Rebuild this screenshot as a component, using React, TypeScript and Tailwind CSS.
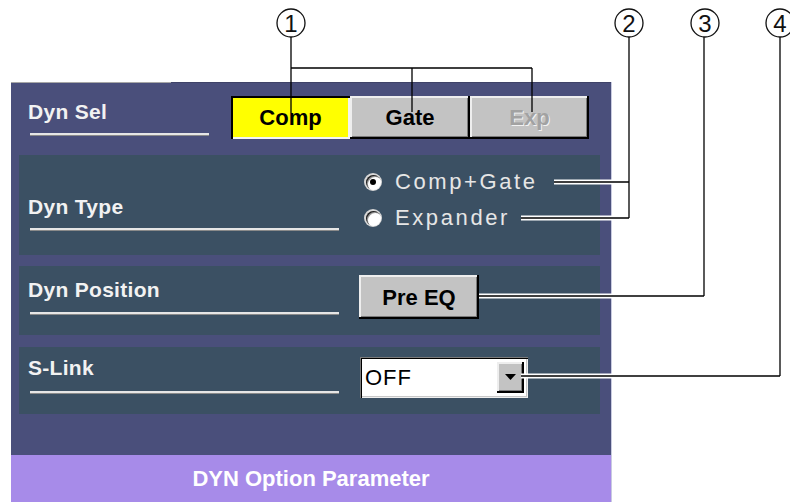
import { ReactNode } from "react";

const FONT = { fontFamily: '"Liberation Sans", Arial, sans-serif' };

const RAISED =
  "bg-[#c3c3c3] shadow-[inset_-2px_-2px_0_#000000,inset_2px_2px_0_#eeeeee,inset_-3px_-3px_0_#7a7a7a]";

function Underline({ width }: { width: number }) {
  return (
    <div
      className="ml-[2px] h-[3px] bg-[#e6e6e6] border-b border-[#8a8a8a]"
      style={{ width }}
    />
  );
}

function Label({ text, pt, gap, line }: { text: string; pt: number; gap: number; line: number }) {
  return (
    <div className="flex flex-col" style={{ paddingTop: pt }}>
      <div className="text-[21px] leading-[24px] font-bold text-[#f2f2f2] tracking-[0.3px]">{text}</div>
      <div style={{ marginTop: gap }}>
        <Underline width={line} />
      </div>
    </div>
  );
}

function Section({ h, children }: { h: number; children: ReactNode }) {
  return (
    <div className="flex bg-[#3b5063] pl-[9px]" style={{ height: h }}>
      {children}
    </div>
  );
}

function Radio({ checked, label }: { checked?: boolean; label: string }) {
  return (
    <div className="flex h-[36px] items-center gap-[13px]">
      <div className="flex h-[18px] w-[18px] items-center justify-center rounded-full bg-[#d8d8d8]">
        <div className="flex h-[15px] w-[15px] items-center justify-center rounded-full bg-white shadow-[inset_1px_1px_0_#222222,inset_2px_2px_0_#9a9a9a]">
          {checked && <div className="h-[6px] w-[6px] rounded-full bg-black" />}
        </div>
      </div>
      <span className="text-[22px] leading-none text-[#e6e6e6] tracking-[2.6px]">{label}</span>
    </div>
  );
}

function Callout({ n, x }: { n: string; x: number }) {
  return (
    <g>
      <circle cx={x} cy={23} r={14} fill="white" stroke="#111" strokeWidth={1.3} />
      <text
        x={x}
        y={32}
        textAnchor="middle"
        fontSize={24}
        fontFamily='"Liberation Sans", Arial, sans-serif'
        fill="#111"
      >
        {n}
      </text>
    </g>
  );
}

function Leader({ d }: { d: string }) {
  return (
    <g>
      <path d={d} stroke="white" strokeWidth={5} fill="none" />
      <path d={d} stroke="#000" strokeWidth={1.5} fill="none" />
    </g>
  );
}

export default function App() {
  return (
    <div className="relative h-[502px] w-[790px] overflow-hidden bg-white" style={FONT}>
      <div className="ml-[11px] mt-[82px] flex h-[420px] w-[601px] flex-col bg-[#4a4f7b] border-r border-[#c9cbe0]">
        <div className="flex h-[1px] shrink-0">
          <div className="w-[160px] bg-[#a7a7a7]" />
          <div className="flex-1 bg-[#3f4368]" />
        </div>

        {/* Dyn Sel */}
        <div className="flex h-[72px] shrink-0 pl-[17px]">
          <div className="w-[203px]">
            <Label text="Dyn Sel" pt={17} gap={9} line={179} />
          </div>
          <div className="mt-[13px] flex h-[43px]">
            <div className="flex w-[119px] items-center justify-center bg-[#ffff00] text-[22px] font-bold text-black shadow-[inset_2px_2px_0_#000000,inset_-2px_-2px_0_#f4f4f4]">
              Comp
            </div>
            <div className={`flex w-[120px] items-center justify-center text-[22px] font-bold text-black ${RAISED}`}>
              Gate
            </div>
            <div
              className={`flex w-[119px] items-center justify-center text-[22px] font-bold text-[#a2a2a2] [text-shadow:1px_1px_0_#f2f2f2] ${RAISED}`}
            >
              Exp
            </div>
          </div>
        </div>

        <div className="ml-[8px] flex w-[581px] flex-col">
          <Section h={100}>
            <div className="w-[331px]">
              <Label text="Dyn Type" pt={40} gap={9} line={309} />
            </div>
            <div className="ml-[5px] flex flex-col pt-[9px]">
              <Radio checked label="Comp+Gate" />
              <Radio label="Expander" />
            </div>
          </Section>
          <div className="h-[11px]" />
          <Section h={69}>
            <div className="w-[331px]">
              <Label text="Dyn Position" pt={12} gap={10} line={309} />
            </div>
            <div className="pt-[9px]">
              <div className={`flex h-[44px] w-[120px] items-center justify-center text-[22px] font-bold text-black ${RAISED}`}>
                Pre EQ
              </div>
            </div>
          </Section>
          <div className="h-[12px]" />
          <Section h={67}>
            <div className="w-[332px]">
              <Label text="S-Link" pt={9} gap={11} line={309} />
            </div>
            <div className="pt-[10px]">
              <div className="flex h-[41px] w-[168px] items-center bg-white shadow-[inset_1px_1px_0_#7a7a7a,inset_2px_2px_0_#000000,inset_-1px_-1px_0_#efefef,inset_-2px_-2px_0_#c8c8c8] pr-[4px]">
                <span className="flex-1 pl-[5px] text-[22px] leading-none text-black tracking-[1px]">OFF</span>
                <div className={`flex h-[31px] w-[27px] items-center justify-center ${RAISED}`}>
                  <svg width="11" height="7" viewBox="0 0 11 7">
                    <path d="M0 0H11L5.5 6Z" fill="#000" />
                  </svg>
                </div>
              </div>
            </div>
          </Section>
        </div>

        <div className="flex-1" />
        <div className="flex h-[47px] shrink-0 items-center justify-center bg-[#a78be9] text-[22px] font-bold text-white">
          DYN Option Parameter
        </div>
      </div>

      <svg className="pointer-events-none absolute inset-0" width={790} height={502}>
        <path d="M291 37V113M291 68H532M412 68V112M532 68V112" stroke="#000" strokeWidth={1.3} fill="none" />
        <Leader d="M554 182H629M521 218H629" />
        <path d="M629 37V218" stroke="#000" strokeWidth={1.3} fill="none" />
        <Leader d="M479 296H704" />
        <path d="M704 37V296" stroke="#000" strokeWidth={1.3} fill="none" />
        <Leader d="M521 376H780" />
        <path d="M780 37V376" stroke="#000" strokeWidth={1.3} fill="none" />
        <Callout n="1" x={291} />
        <Callout n="2" x={629} />
        <Callout n="3" x={705} />
        <Callout n="4" x={780} />
      </svg>
    </div>
  );
}
